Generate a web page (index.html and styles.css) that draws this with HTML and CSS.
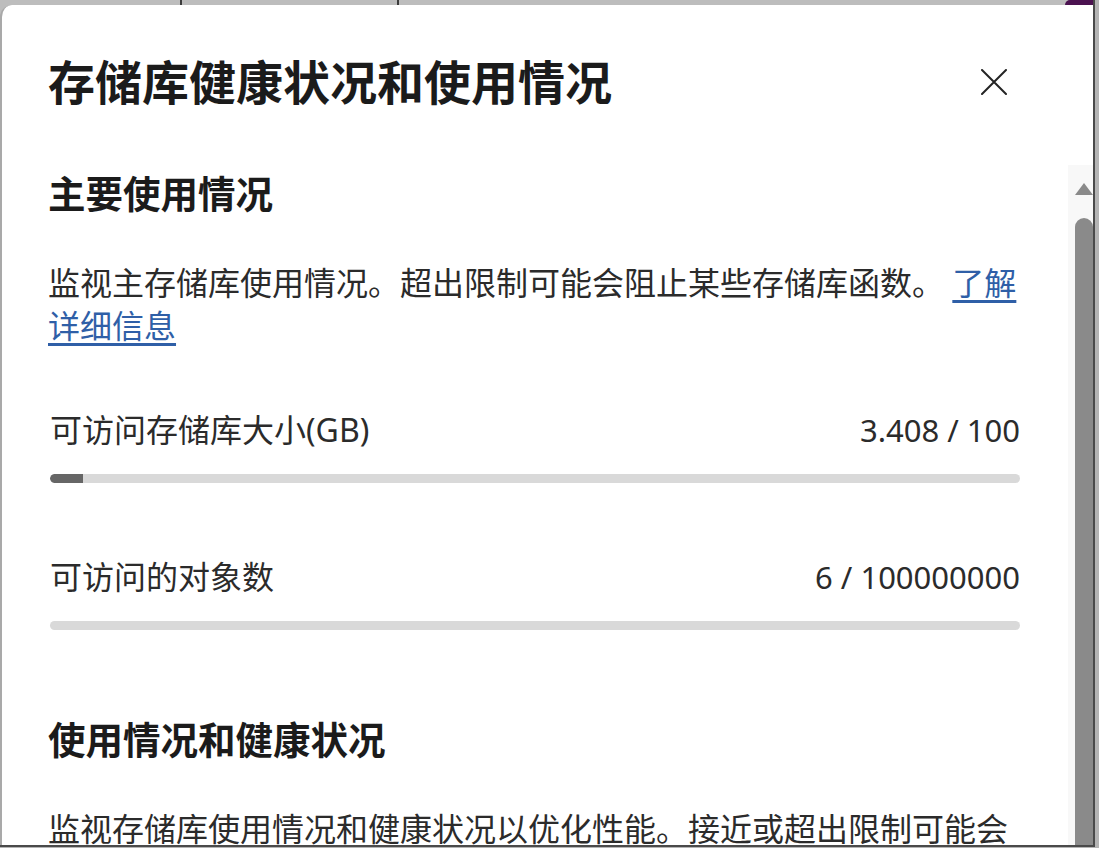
FILE: index.html
```html
<!DOCTYPE html>
<html lang="zh-CN">
<head>
  <meta charset="UTF-8" />
  <title>存储库健康状况和使用情况</title>
  <meta name="viewport" content="width=device-width, initial-scale=1.0" />
  <link rel="stylesheet" href="styles.css">
</head>
<body>
  <div class="window">
    <div class="topbar">
      <span class="tick first"></span>
      <span class="tick second"></span>
      <span class="accent"></span>
    </div>

    <div class="panel">
      <div class="content">
        <div class="header">
          <h1>存储库健康状况和使用情况</h1>
          <button class="close" aria-label="关闭">
            <svg width="26" height="26" viewBox="0 0 26 26">
              <path d="M1 1 L25 25 M25 1 L1 25" stroke="#242424" stroke-width="2" fill="none" stroke-linecap="round" />
            </svg>
          </button>
        </div>

        <h2>主要使用情况</h2>
        <p class="desc">监视主存储库使用情况。超出限制可能会阻止某些存储库函数。 <a href="#">了解详细信息</a></p>

        <div class="usage">
          <div class="usage-row">
            <span>可访问存储库大小(GB)</span>
            <span class="value">3.408 / 100</span>
          </div>
          <div class="bar"><div class="fill" style="width: 3.4%"></div></div>
        </div>

        <div class="usage">
          <div class="usage-row">
            <span>可访问的对象数</span>
            <span class="value">6 / 100000000</span>
          </div>
          <div class="bar"><div class="fill" style="width: 0%"></div></div>
        </div>

        <h2 class="second-heading">使用情况和健康状况</h2>
        <p class="desc">监视存储库使用情况和健康状况以优化性能。接近或超出限制可能会影响存储库的性能和可用性。</p>
      </div>

      <div class="scrollbar">
        <div class="arrow"></div>
        <div class="thumb"></div>
      </div>
    </div>
  </div>
</body>
</html>
```

FILE: styles.css
```css
body {
  margin: 0;
  padding: 0;
  background: #b4b4b4;
  font-family: "Noto Sans", "Noto Sans CJK SC", sans-serif;
  overflow: hidden;
}

.window {
  width: 1093px;
  height: 845px;
  display: flex;
  flex-direction: column;
  background: #bdbdbd;
  border-right: 2px solid #4a4a4a;
  border-bottom: 2px solid #4a4a4a;
  overflow: hidden;
}

.topbar {
  height: 5px;
  display: flex;
  flex-shrink: 0;
}

.tick {
  width: 2px;
  background: #3c3c3c;
}

.tick.first { margin-left: 180px; }
.tick.second { margin-left: 215px; }

.accent {
  margin-left: auto;
  width: 28px;
  background: #4b1250;
  border-top-left-radius: 10px;
}

.panel {
  flex: 1;
  min-height: 0;
  display: flex;
  background: #fff;
  border-left: 2px solid #a9a9a9;
  border-top-left-radius: 12px;
  overflow: hidden;
}

.content {
  flex: 1;
  padding: 49px 48px 0 46px;
  color: #2b2b2b;
}

.header {
  display: flex;
  justify-content: space-between;
  align-items: center;
}

h1 {
  margin: 0;
  font-size: 47px;
  line-height: 56px;
  font-weight: 700;
  color: #1b1b1b;
}

.close {
  margin-right: 13px;
  padding: 0;
  border: none;
  background: none;
  display: flex;
  cursor: pointer;
}

h2 {
  margin: 60px 0 0;
  font-size: 37.5px;
  line-height: 48px;
  font-weight: 700;
  color: #1b1b1b;
}

h2.second-heading {
  margin-top: 86px;
}

.desc {
  margin: 43px 0 0;
  font-size: 32px;
  line-height: 43px;
}

.desc a {
  color: #2f5fa7;
  text-decoration: underline;
  text-underline-offset: 5px;
}

.usage {
  margin-top: 61px;
}

.usage + .usage {
  margin-top: 72px;
}

.usage-row {
  display: flex;
  justify-content: space-between;
  align-items: baseline;
  font-size: 32px;
  line-height: 43px;
  padding-left: 2px;
}

.usage-row .value {
  font-size: 31px;
}

.bar {
  margin: 22px 0 0 2px;
  height: 9px;
  border-radius: 5px;
  background: #d9d9d9;
  overflow: hidden;
}

.fill {
  height: 100%;
  background: #666;
  border-radius: 5px 0 0 5px;
}

.scrollbar {
  width: 25px;
  margin-top: 160px;
  background: #f8f8f8;
  display: flex;
  flex-direction: column;
  align-items: flex-end;
}

.arrow {
  margin-top: 18px;
  width: 0;
  height: 0;
  border-left: 9px solid transparent;
  border-right: 9px solid transparent;
  border-bottom: 12px solid #8a8a8a;
}

.thumb {
  margin-top: 23px;
  width: 18px;
  flex: 1;
  background: #8a8a8a;
  border-radius: 9px 9px 0 0;
}
```
